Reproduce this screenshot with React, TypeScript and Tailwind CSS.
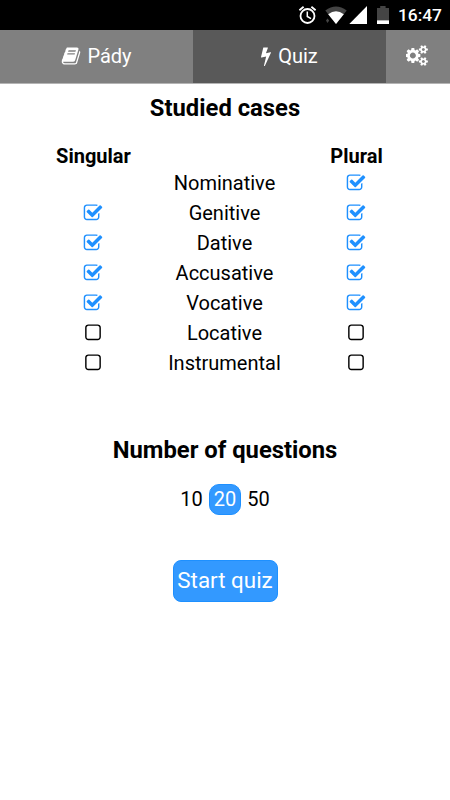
import clsx from "clsx";
import { useState } from "react";

const ICONS = {
  book: "M1703 478q40 57 18 129l-275 906q-19 64-76.5 107.5t-122.5 43.5h-923q-77 0-148.5-53.5t-99.5-131.5q-24-67-2-127 0-4 3-27t4-37q1-8-3-21.5t-3-19.5q2-11 8-21t16.5-23.5 16.5-23.5q23-38 45-91.5t30-91.5q3-10 .5-30t-.5-28q3-11 17-28t17-23q21-36 42-92t25-90q1-9-2.5-32t.5-28q4-13 22-30.5t22-22.5q19-26 42.5-84.5t27.5-96.5q1-8-3-25.5t-2-26.5q2-8 9-18t18-23 17-21q8-12 16.5-30.5t15-35 16-36 19.5-32 26.5-23.5 36-11.5 47.5 5.5l-1 3q38-9 51-9h761q74 0 114 56t18 130l-274 906q-36 119-71.5 153.5t-128.5 34.5h-869q-27 0-38 15-11 16-1 43 24 70 144 70h923q29 0 56-15.5t35-41.5l300-987q7-22 5-57 38 15 59 43zm-1064 2q-4 13 2 22.5t20 9.5h608q13 0 25.5-9.5t16.5-22.5l21-64q4-13-2-22.5t-20-9.5h-608q-13 0-25.5 9.5t-16.5 22.5zm-83 256q-4 13 2 22.5t20 9.5h608q13 0 25.5-9.5t16.5-22.5l21-64q4-13-2-22.5t-20-9.5h-608q-13 0-25.5 9.5t-16.5 22.5z",
  bolt: "M1333 566q18 20 7 44l-540 1157q-13 25-42 25-4 0-14-2-17-5-25.5-19t-4.5-30l197-808-406 101q-4 1-12 1-18 0-31-11-18-15-13-39l201-825q4-14 16-23t28-9h328q19 0 32 12.5t13 29.5q0 8-5 18l-171 463 396-98q8-2 12-2 19 0 34 15z",
  cogs: "M832 896q0-106-75-181t-181-75-181 75-75 181 75 181 181 75 181-75 75-181zm768 512q0-52-38-90t-90-38-90 38-38 90q0 53 37.5 90.5t90.5 37.5 90.5-37.5 37.5-90.5zm0-1024q0-52-38-90t-90-38-90 38-38 90q0 53 37.5 90.5t90.5 37.5 90.5-37.5 37.5-90.5zm-384 421v185q0 10-7 19.5t-16 10.5l-155 24q-11 35-32 76 34 48 90 115 7 11 7 20 0 12-7 19-23 30-82.5 89.5t-78.5 59.5q-11 0-21-7l-115-90q-37 19-77 31-11 108-23 155-7 24-30 24h-186q-11 0-20-7.5t-10-17.5l-23-153q-34-10-75-31l-118 89q-7 7-20 7-11 0-21-8-144-133-144-160 0-9 7-19 10-14 41-53t47-61q-23-44-35-82l-152-24q-10-1-17-9.5t-7-19.5v-185q0-10 7-19.5t16-10.5l155-24q11-35 32-76-34-48-90-115-7-11-7-20 0-12 7-20 22-30 82-89t79-59q11 0 21 7l115 90q34-18 77-32 11-108 23-154 7-24 30-24h186q11 0 20 7.5t10 17.5l23 153q34 10 75 31l118-89q8-7 20-7 11 0 21 8 144 133 144 160 0 8-7 19-12 16-42 54t-45 60q23 48 34 82l152 23q10 2 17 10.5t7 19.5zm640 533v140q0 16-149 31-12 27-30 52 51 113 51 138 0 4-4 7-122 71-124 71-8 0-46-47t-52-68q-20 2-30 2t-30-2q-14 21-52 68t-46 47q-2 0-124-71-4-3-4-7 0-25 51-138-18-25-30-52-149-15-149-31v-140q0-16 149-31 13-29 30-52-51-113-51-138 0-4 4-7 4-2 35-20t59-34 30-16q8 0 46 46.5t52 67.5q20-2 30-2t30 2q51-71 92-112l6-2q4 0 124 70 4 3 4 7 0 25-51 138 17 23 30 52 149 15 149 31zm0-1024v140q0 16-149 31-12 27-30 52 51 113 51 138 0 4-4 7-122 71-124 71-8 0-46-47t-52-68q-20 2-30 2t-30-2q-14 21-52 68t-46 47q-2 0-124-71-4-3-4-7 0-25 51-138-18-25-30-52-149-15-149-31v-140q0-16 149-31 13-29 30-52-51-113-51-138 0-4 4-7 4-2 35-20t59-34 30-16q8 0 46 46.5t52 67.5q20-2 30-2t30 2q51-71 92-112l6-2q4 0 124 70 4 3 4 7 0 25-51 138 17 23 30 52 149 15 149 31z",
  checked:
    "M1472 930v318q0 119-84.5 203.5t-203.5 84.5h-832q-119 0-203.5-84.5t-84.5-203.5v-832q0-119 84.5-203.5t203.5-84.5h832q63 0 117 25 15 7 18 23 3 17-9 29l-49 49q-10 10-23 10-3 0-9-2-23-6-45-6h-832q-66 0-113 47t-47 113v832q0 66 47 113t113 47h832q66 0 113-47t47-113v-254q0-13 9-22l64-64q10-10 23-10 6 0 12 3 20 8 20 29zm231-489l-814 814q-24 24-57 24t-57-24l-430-430q-24-24-24-57t24-57l110-110q24-24 57-24t57 24l263 263 647-647q24-24 57-24t57 24l110 110q24 24 24 57t-24 57z",
  unchecked:
    "M1312 256h-832q-66 0-113 47t-47 113v832q0 66 47 113t113 47h832q66 0 113-47t47-113v-832q0-66-47-113t-113-47zm288 160v832q0 119-84.5 203.5t-203.5 84.5h-832q-119 0-203.5-84.5t-84.5-203.5v-832q0-119 84.5-203.5t203.5-84.5h832q119 0 203.5 84.5t84.5 203.5z",
};

function Icon({
  name,
  viewBox = "0 0 1792 1792",
  className,
}: {
  name: keyof typeof ICONS;
  viewBox?: string;
  className?: string;
}) {
  return (
    <svg
      viewBox={viewBox}
      fill="currentColor"
      aria-hidden="true"
      className={clsx("shrink-0", className)}
    >
      <path d={ICONS[name]} />
    </svg>
  );
}

function StatusBar() {
  return (
    <div className="flex h-[30px] items-center justify-end bg-black pr-2 text-white">
      <svg width="92" height="30" viewBox="298 0 92 30" fill="none">
        {/* alarm clock */}
        <g stroke="#fff" strokeWidth="1.8">
          <circle cx="307.5" cy="16" r="7" />
          <path d="M307.3 11.5v5l3.7 2.2" strokeWidth="1.5" />
          <path d="M299.4 10.2l4.2-3.5M315.6 10.2l-4.2-3.5" />
        </g>
        {/* wifi, partial strength */}
        <path d="M325.3 10.6Q336 2.6 346.7 10.6L336 24Z" fill="#444" />
        <path d="M328.2 14.2Q336 8.2 343.8 14.2L336 24Z" fill="#fff" />
        <path d="M327.5 18.5l1.7 2-1.7 2.5-1.5-2.5z" fill="#444" />
        <path d="M349.3 24L367 6v18z" fill="#fff" />
        {/* battery */}
        <path d="M377 8h3.2V6h5.4v2h3.4v12.3h-12z" fill="#444" />
        <path d="M377 20.3h12V24h-12z" fill="#fff" />
      </svg>
      <time className="ml-2 text-[17.4px] leading-[30px] font-medium">
        16:47
      </time>
    </div>
  );
}

type CaseRow = { name: string; singular?: boolean; plural?: boolean };

const initialCases: CaseRow[] = [
  { name: "Nominative", plural: true },
  { name: "Genitive", singular: true, plural: true },
  { name: "Dative", singular: true, plural: true },
  { name: "Accusative", singular: true, plural: true },
  { name: "Vocative", singular: true, plural: true },
  { name: "Locative", singular: false, plural: false },
  { name: "Instrumental", singular: false, plural: false },
];

function CaseCheckbox({
  label,
  checked,
  onToggle,
}: {
  label: string;
  checked?: boolean;
  onToggle: () => void;
}) {
  // The nominative singular is always known, so it has no checkbox
  if (checked === undefined) return <span />;

  return (
    <button
      type="button"
      role="checkbox"
      aria-checked={checked}
      aria-label={label}
      onClick={onToggle}
      className={clsx(
        "flex h-[30px] items-center justify-center pr-px pb-0.5",
        checked ? "text-[#1e90ff]" : "text-black",
      )}
    >
      <Icon name={checked ? "checked" : "unchecked"} className="size-5" />
    </button>
  );
}

export default function App() {
  const [cases, setCases] = useState(initialCases);
  const [count, setCount] = useState(20);

  function toggle(index: number, field: "singular" | "plural") {
    setCases((rows) =>
      rows.map((row, i) =>
        i === index ? { ...row, [field]: !row[field] } : row,
      ),
    );
  }

  return (
    <div className="flex h-screen flex-col bg-white font-[Roboto,sans-serif] text-xl text-black">
      <StatusBar />
      <nav className="flex h-[54px] border-b border-[#b4b4b4] bg-[#808080] text-white">
        <button className="flex w-[193px] items-center justify-center gap-1.5 pb-px">
          <Icon name="book" className="size-5" />
          Pády
        </button>
        <button className="flex w-[193px] items-center justify-center gap-0.5 bg-[#595959] pr-[5px] pb-px">
          <Icon name="bolt" className="size-5" />
          Quiz
        </button>
        <button
          aria-label="Settings"
          className="flex flex-1 items-center justify-center pr-0.5 pb-0.5"
        >
          <Icon
            name="cogs"
            viewBox="0 0 1856 1792"
            className="h-[21px] w-[22px]"
          />
        </button>
      </nav>
      <main className="flex flex-col items-center">
        <h1 className="mt-2 text-[23.8px] leading-8 font-bold">
          Studied cases
        </h1>
        <section className="mt-[18px] grid w-[393px] grid-cols-[130px_133px_130px] text-center">
          <span className="h-[27px] leading-[29px] font-bold">Singular</span>
          <span />
          <span className="h-[27px] leading-[29px] font-bold">Plural</span>
          {cases.map((row, index) => (
            <div key={row.name} className="contents">
              <CaseCheckbox
                label={`${row.name} singular`}
                checked={row.singular}
                onToggle={() => toggle(index, "singular")}
              />
              <span className="pr-px leading-7">{row.name}</span>
              <CaseCheckbox
                label={`${row.name} plural`}
                checked={row.plural}
                onToggle={() => toggle(index, "plural")}
              />
            </div>
          ))}
        </section>
        <h2 className="mt-[55px] text-[23.8px] leading-8 font-bold">
          Number of questions
        </h2>
        <div className="mt-[18px] flex gap-px">
          {[10, 20, 50].map((n) => (
            <button
              key={n}
              type="button"
              onClick={() => setCount(n)}
              className={clsx(
                "h-[31px] rounded-[10px] border px-1 pb-1 leading-7",
                n === count
                  ? "border-[#1e90ff] bg-[#3399ff] text-white"
                  : "border-transparent",
              )}
            >
              {n}
            </button>
          ))}
        </div>
        <button
          type="button"
          className="mt-[45px] h-[42px] w-[105px] rounded-lg border border-[#1e90ff] bg-[#3399ff] text-[22.4px] whitespace-nowrap text-white"
        >
          Start quiz
        </button>
      </main>
    </div>
  );
}
